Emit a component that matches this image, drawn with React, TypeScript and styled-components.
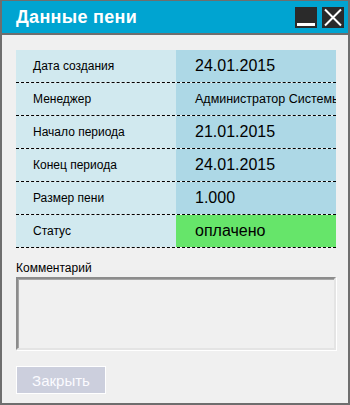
import * as React from 'react';
import styled, { createGlobalStyle } from 'styled-components';

const GlobalStyle = createGlobalStyle`
  html, body {
    margin: 0;
    padding: 0;
    background: #f0f0f0;
  }
  * {
    box-sizing: border-box;
  }
`;

const colors = {
  border: '#6e6e6e',
  title: '#00a4d1',
  body: '#f0f0f0',
  labelCell: '#d1e9ef',
  valueCell: '#add8e6',
  paid: '#66e56a',
  dark: '#2a2a2a',
};

const Window = styled.div`
  width: 350px;
  height: 405px;
  display: flex;
  flex-direction: column;
  border: 2px solid ${colors.border};
  border-top-width: 1px;
  background: ${colors.body};
  font-family: 'Liberation Sans', Arial, sans-serif;
`;

const TitleBar = styled.div`
  height: 34px;
  display: flex;
  align-items: center;
  justify-content: space-between;
  padding: 0 4px 0 14px;
  background: ${colors.title};
  border-bottom: 2px solid ${colors.border};
`;

const Title = styled.h1`
  margin: 0;
  color: #fff;
  font-size: 18px;
  font-weight: bold;
  letter-spacing: 0.3px;
`;

const TitleButtons = styled.div`
  display: flex;
  gap: 5px;
  margin-top: 1px;
`;

const TitleButton = styled.div`
  width: 22px;
  height: 21px;
  background: ${colors.dark};
  position: relative;
`;

const MinimizeBar = styled.div`
  position: absolute;
  left: 2px;
  right: 2px;
  bottom: 2px;
  height: 3px;
  background: #fff;
`;

const Content = styled.div`
  flex: 1;
  display: flex;
  flex-direction: column;
  padding: 15px 12px 0 14px;
`;

const Table = styled.div`
  width: 320px;
  display: flex;
  flex-direction: column;
`;

const Row = styled.div`
  display: grid;
  grid-template-columns: 160px 160px;
  height: 33px;
  border-bottom: 1px dashed #000;
`;

const LabelCell = styled.div`
  display: flex;
  align-items: center;
  padding-left: 17px;
  background: ${colors.labelCell};
  font-size: 12px;
  color: #000;
`;

const ValueCell = styled.div<{ $paid?: boolean; $small?: boolean }>`
  display: flex;
  align-items: center;
  padding-left: 19px;
  overflow: hidden;
  white-space: nowrap;
  background: ${p => (p.$paid ? colors.paid : colors.valueCell)};
  font-size: ${p => (p.$small ? '12.5px' : '16px')};
  color: #000;
`;

const CommentLabel = styled.div`
  margin-top: 13px;
  font-size: 12px;
  color: #000;
  line-height: 14px;
`;

const CommentBox = styled.div`
  margin-top: 2px;
  width: 320px;
  height: 73px;
  background: ${colors.body};
  border-style: solid;
  border-width: 2px;
  border-color: #8c8c8c #e4e4e4 #e4e4e4 #8c8c8c;
  box-shadow: inset 1px 1px 0 #a6a6a6, 1px 1px 0 #fff;
`;

const CloseButton = styled.button`
  margin-top: 16px;
  width: 90px;
  height: 28px;
  padding: 0;
  border: 1px solid #fff;
  background: #cccfdd;
  color: #fbfbff;
  font-family: 'Liberation Sans', Arial, sans-serif;
  font-size: 15px;
`;

const rows: Array<{ label: string; value: string; small?: boolean; paid?: boolean }> = [
  { label: 'Дата создания', value: '24.01.2015' },
  { label: 'Менеджер', value: 'Администратор Системы', small: true },
  { label: 'Начало периода', value: '21.01.2015' },
  { label: 'Конец периода', value: '24.01.2015' },
  { label: 'Размер пени', value: '1.000' },
  { label: 'Статус', value: 'оплачено', paid: true },
];

function App() {
  return (
    <Window>
      <GlobalStyle />
      <TitleBar>
        <Title>Данные пени</Title>
        <TitleButtons>
          <TitleButton>
            <MinimizeBar />
          </TitleButton>
          <TitleButton>
            <svg width="22" height="21" viewBox="0 0 22 21">
              <path d="M3 2.5 L19 18.5 M19 2.5 L3 18.5" stroke="#fff" strokeWidth="2" fill="none" />
            </svg>
          </TitleButton>
        </TitleButtons>
      </TitleBar>
      <Content>
        <Table>
          {rows.map(row => (
            <Row key={row.label}>
              <LabelCell>{row.label}</LabelCell>
              <ValueCell $paid={row.paid} $small={row.small}>
                {row.value}
              </ValueCell>
            </Row>
          ))}
        </Table>
        <CommentLabel>Комментарий</CommentLabel>
        <CommentBox />
        <CloseButton disabled>Закрыть</CloseButton>
      </Content>
    </Window>
  );
}

export default App;
